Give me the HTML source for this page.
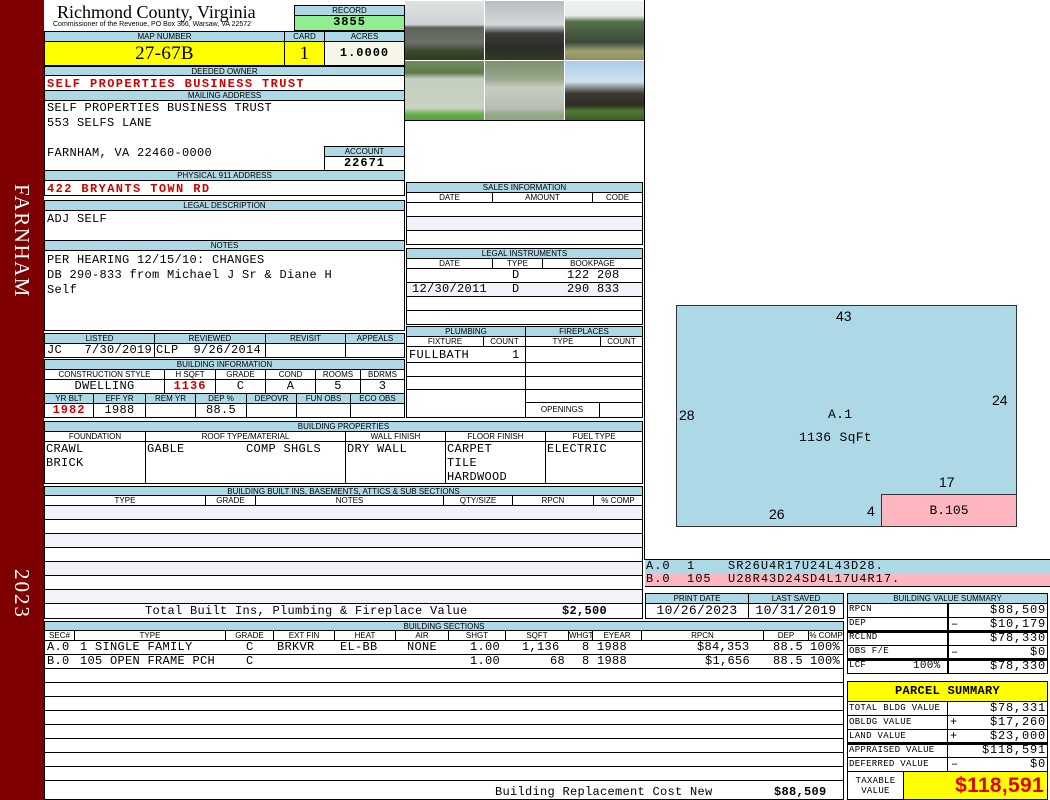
<!DOCTYPE html>
<html><head><meta charset="utf-8"><style>
*{margin:0;padding:0;box-sizing:border-box}
body{width:1050px;height:800px;background:#fff;position:relative;overflow:hidden;font-family:"Liberation Mono",monospace}
div{position:absolute}
.h{background:#add8e6;border:1px solid #000;font:8px/9px "Liberation Sans",sans-serif;text-align:center;color:#000;white-space:nowrap;overflow:hidden}
.c{border:1px solid #000;white-space:nowrap;overflow:hidden;font-size:12px;line-height:13px;letter-spacing:.3px}
.m{font-family:"Liberation Mono",monospace;font-size:12px;letter-spacing:.3px;white-space:nowrap}
.r{color:#d00000;font-weight:bold;letter-spacing:1.4px}
.s{font:8px/9px "Liberation Sans",sans-serif;text-align:center;white-space:nowrap;letter-spacing:0}
</style></head><body>
<div style="left:0;top:0;width:44px;height:800px;background:#7f0000"></div>
<div style="left:4px;top:178px;width:36px;height:125px;color:#fff;font:21px 'Liberation Serif',serif;letter-spacing:1.5px;writing-mode:vertical-rl;text-align:center;line-height:36px">FARNHAM</div>
<div style="left:4px;top:569px;width:36px;height:55px;color:#fff;font:21px 'Liberation Serif',serif;letter-spacing:2px;writing-mode:vertical-rl;line-height:36px">2023</div>

<!-- header -->
<div style="left:57px;top:2px;font:18px/20px 'Liberation Serif',serif">Richmond County, Virginia</div>
<div style="left:53px;top:21px;font:7px/8px 'Liberation Sans',sans-serif">Commissioner of the Revenue, PO Box 366, Warsaw, VA 22572</div>
<div class="h" style="left:294px;top:5px;width:111px;height:11px">RECORD</div>
<div class="c" style="left:294px;top:15px;width:111px;height:16px;background:#90ee90;text-align:center;font-weight:bold;letter-spacing:1px">3855</div>
<div class="h" style="left:44px;top:31px;width:241px;height:11px">MAP NUMBER</div>
<div class="h" style="left:284px;top:31px;width:41px;height:11px">CARD</div>
<div class="h" style="left:324px;top:31px;width:81px;height:11px">ACRES</div>
<div class="c" style="left:44px;top:41px;width:241px;height:25px;background:#ffff00;font:19px/23px 'Liberation Serif',serif;text-align:center">27-67B</div>
<div class="c" style="left:284px;top:41px;width:41px;height:25px;background:#ffff00;font:19px/23px 'Liberation Serif',serif;text-align:center">1</div>
<div class="c" style="left:324px;top:41px;width:81px;height:25px;background:#f5f5e8;font-size:12px;line-height:23px;font-weight:bold;text-align:center;letter-spacing:1px">1.0000</div>
<div class="h" style="left:44px;top:66px;width:361px;height:10px">DEEDED OWNER</div>
<div class="c r" style="left:44px;top:75px;width:361px;height:16px;padding-left:2px;line-height:16px">SELF PROPERTIES BUSINESS TRUST</div>
<div class="h" style="left:44px;top:90px;width:361px;height:11px">MAILING ADDRESS</div>
<div class="c" style="left:44px;top:100px;width:361px;height:71px;padding-left:2px;line-height:15px">SELF PROPERTIES BUSINESS TRUST<br>553 SELFS LANE<br><br>FARNHAM, VA 22460-0000</div>
<div class="h" style="left:324px;top:146px;width:81px;height:11px">ACCOUNT</div>
<div class="c" style="left:324px;top:156px;width:81px;height:15px;text-align:center;font-weight:bold;letter-spacing:1px">22671</div>
<div class="h" style="left:44px;top:170px;width:361px;height:11px">PHYSICAL 911 ADDRESS</div>
<div class="c r" style="left:44px;top:180px;width:361px;height:16px;padding-left:2px;line-height:16px">422 BRYANTS TOWN RD</div>
<div class="h" style="left:44px;top:200px;width:361px;height:11px">LEGAL DESCRIPTION</div>
<div class="c" style="left:44px;top:210px;width:361px;height:31px;padding:2px 0 0 2px">ADJ SELF</div>
<div class="h" style="left:44px;top:240px;width:361px;height:11px">NOTES</div>
<div class="c" style="left:44px;top:250px;width:361px;height:81px;padding:2px 0 0 2px;line-height:15px">PER HEARING 12/15/10: CHANGES<br>DB 290-833 from Michael J Sr &amp; Diane H<br>Self</div>

<!-- listed -->
<div class="h" style="left:44px;top:333px;width:111px;height:11px">LISTED</div>
<div class="h" style="left:154px;top:333px;width:112px;height:11px">REVIEWED</div>
<div class="h" style="left:265px;top:333px;width:81px;height:11px">REVISIT</div>
<div class="h" style="left:345px;top:333px;width:60px;height:11px">APPEALS</div>
<div class="c" style="left:44px;top:343px;width:111px;height:15px;padding-left:2px">JC&nbsp;&nbsp;&nbsp;7/30/2019</div>
<div class="c" style="left:154px;top:343px;width:112px;height:15px;padding-left:1px">CLP&nbsp;&nbsp;9/26/2014</div>
<div class="c" style="left:265px;top:343px;width:81px;height:15px"></div>
<div class="c" style="left:345px;top:343px;width:60px;height:15px"></div>
<div class="h" style="left:44px;top:359px;width:361px;height:11px">BUILDING INFORMATION</div>
<div class="c s" style="left:44px;top:369px;width:121px;height:11px">CONSTRUCTION STYLE</div>
<div class="c s" style="left:164px;top:369px;width:52px;height:11px">H SQFT</div>
<div class="c s" style="left:215px;top:369px;width:51px;height:11px">GRADE</div>
<div class="c s" style="left:265px;top:369px;width:51px;height:11px">COND</div>
<div class="c s" style="left:315px;top:369px;width:46px;height:11px">ROOMS</div>
<div class="c s" style="left:360px;top:369px;width:45px;height:11px">BDRMS</div>
<div class="c" style="left:44px;top:379px;width:121px;height:15px;text-align:center">DWELLING</div>
<div class="c r" style="left:164px;top:379px;width:52px;height:15px;text-align:center;letter-spacing:1px">1136</div>
<div class="c" style="left:215px;top:379px;width:51px;height:15px;text-align:center">C</div>
<div class="c" style="left:265px;top:379px;width:51px;height:15px;text-align:center">A</div>
<div class="c" style="left:315px;top:379px;width:46px;height:15px;text-align:center">5</div>
<div class="c" style="left:360px;top:379px;width:45px;height:15px;text-align:center">3</div>
<div class="h" style="left:44px;top:393px;width:50px;height:11px">YR BLT</div>
<div class="h" style="left:93px;top:393px;width:53px;height:11px">EFF YR</div>
<div class="h" style="left:145px;top:393px;width:51px;height:11px">REM YR</div>
<div class="h" style="left:195px;top:393px;width:52px;height:11px">DEP %</div>
<div class="h" style="left:246px;top:393px;width:51px;height:11px">DEPOVR</div>
<div class="h" style="left:296px;top:393px;width:55px;height:11px">FUN OBS</div>
<div class="h" style="left:350px;top:393px;width:55px;height:11px">ECO OBS</div>
<div class="c r" style="left:44px;top:403px;width:50px;height:15px;text-align:center;letter-spacing:1px">1982</div>
<div class="c" style="left:93px;top:403px;width:53px;height:15px;text-align:center">1988</div>
<div class="c" style="left:145px;top:403px;width:51px;height:15px"></div>
<div class="c" style="left:195px;top:403px;width:52px;height:15px;text-align:center">88.5</div>
<div class="c" style="left:246px;top:403px;width:51px;height:15px"></div>
<div class="c" style="left:296px;top:403px;width:55px;height:15px"></div>
<div class="c" style="left:350px;top:403px;width:55px;height:15px"></div>

<!-- photos -->
<div style="left:405px;top:0;width:240px;height:121px;border-bottom:1px solid #000"></div>
<div style="left:405px;top:1px;width:79px;height:59px;background:linear-gradient(#dfe2e2 0,#cfd3d4 40%,#5e6258 45%,#6d706a 70%,#3b4a2e 85%,#2f3a26)"></div>
<div style="left:485px;top:1px;width:79px;height:59px;background:linear-gradient(#b8bcc0 0,#d6d8da 40%,#3c3c38 55%,#2b2c28 80%,#2f3c22)"></div>
<div style="left:565px;top:1px;width:79px;height:59px;background:linear-gradient(#f0f0f0 0,#e8ecec 25%,#54714a 35%,#3c4a38 70%,#a0a070 85%,#8e9060)"></div>
<div style="left:405px;top:61px;width:79px;height:59px;background:linear-gradient(#6e8f5a 0,#5e7a4e 20%,#c5cfbf 30%,#c8d2c2 80%,#66b04a 90%,#5aa040)"></div>
<div style="left:485px;top:61px;width:79px;height:59px;background:linear-gradient(#7e9070 0,#98a88c 30%,#c6ccc2 45%,#b8beb2 80%,#8ea880 92%,#90a880)"></div>
<div style="left:565px;top:61px;width:79px;height:59px;background:linear-gradient(#aacbe8 0,#d0e2f0 35%,#3a3a30 55%,#2e2e26 75%,#4e7a30 85%,#3e5a28)"></div>

<!-- sales -->
<div style="left:405px;top:120px;width:240px;height:62px;border-right:1px solid #000"></div>
<div class="h" style="left:406px;top:182px;width:237px;height:11px">SALES INFORMATION</div>
<div class="c s" style="left:406px;top:192px;width:87px;height:11px">DATE</div>
<div class="c s" style="left:492px;top:192px;width:101px;height:11px">AMOUNT</div>
<div class="c s" style="left:592px;top:192px;width:51px;height:11px">CODE</div>
<div class="c" style="left:406px;top:202px;width:237px;height:15px"></div>
<div class="c" style="left:406px;top:216px;width:237px;height:15px;background:#f2f3f8"></div>
<div class="c" style="left:406px;top:230px;width:237px;height:15px"></div>
<div class="h" style="left:406px;top:248px;width:237px;height:11px">LEGAL INSTRUMENTS</div>
<div class="c s" style="left:406px;top:258px;width:87px;height:11px">DATE</div>
<div class="c s" style="left:492px;top:258px;width:51px;height:11px">TYPE</div>
<div class="c s" style="left:542px;top:258px;width:101px;height:11px">BOOKPAGE</div>
<div class="c" style="left:406px;top:268px;width:237px;height:15px;line-height:13px"><span style="position:absolute;left:105px">D</span><span style="position:absolute;left:160px">122 208</span></div>
<div class="c" style="left:406px;top:282px;width:237px;height:15px;background:#f2f3f8;line-height:13px"><span style="position:absolute;left:5px">12/30/2011</span><span style="position:absolute;left:105px">D</span><span style="position:absolute;left:160px">290 833</span></div>
<div class="c" style="left:406px;top:296px;width:237px;height:15px"></div>
<div class="c" style="left:406px;top:310px;width:237px;height:15px"></div>

<!-- plumbing -->
<div class="h" style="left:406px;top:326px;width:120px;height:11px">PLUMBING</div>
<div class="h" style="left:525px;top:326px;width:118px;height:11px">FIREPLACES</div>
<div class="c s" style="left:406px;top:336px;width:78px;height:11px">FIXTURE</div>
<div class="c s" style="left:483px;top:336px;width:43px;height:11px">COUNT</div>
<div class="c s" style="left:525px;top:336px;width:76px;height:11px">TYPE</div>
<div class="c s" style="left:600px;top:336px;width:43px;height:11px">COUNT</div>
<div class="c" style="left:406px;top:346px;width:120px;height:72px;line-height:16px;padding-left:2px">FULLBATH<span style="position:absolute;left:105px">1</span></div>
<div style="left:406px;top:362px;width:120px;border-top:1px solid #000"></div>
<div style="left:406px;top:376px;width:120px;border-top:1px solid #000"></div>
<div style="left:406px;top:389px;width:120px;border-top:1px solid #000"></div>
<div class="c" style="left:525px;top:346px;width:118px;height:72px"></div>
<div style="left:525px;top:362px;width:118px;border-top:1px solid #000"></div>
<div style="left:525px;top:376px;width:118px;border-top:1px solid #000"></div>
<div style="left:525px;top:389px;width:118px;border-top:1px solid #000"></div>
<div style="left:525px;top:402px;width:118px;border-top:1px solid #000"></div>
<div class="s" style="left:526px;top:405px;width:72px">OPENINGS</div>
<div style="left:599px;top:402px;height:15px;border-left:1px solid #000"></div>

<!-- building properties -->
<div class="h" style="left:44px;top:421px;width:599px;height:11px">BUILDING PROPERTIES</div>
<div class="c s" style="left:44px;top:431px;width:102px;height:11px">FOUNDATION</div>
<div class="c s" style="left:145px;top:431px;width:201px;height:11px">ROOF TYPE/MATERIAL</div>
<div class="c s" style="left:345px;top:431px;width:101px;height:11px">WALL FINISH</div>
<div class="c s" style="left:445px;top:431px;width:101px;height:11px">FLOOR FINISH</div>
<div class="c s" style="left:545px;top:431px;width:98px;height:11px">FUEL TYPE</div>
<div class="c" style="left:44px;top:441px;width:102px;height:43px;line-height:14px;padding-left:1px">CRAWL<br>BRICK</div>
<div class="c" style="left:145px;top:441px;width:201px;height:43px;line-height:14px;padding-left:1px">GABLE<span style="position:absolute;left:100px">COMP SHGLS</span></div>
<div class="c" style="left:345px;top:441px;width:101px;height:43px;line-height:14px;padding-left:1px">DRY WALL</div>
<div class="c" style="left:445px;top:441px;width:101px;height:43px;line-height:14px;padding-left:1px">CARPET<br>TILE<br>HARDWOOD</div>
<div class="c" style="left:545px;top:441px;width:98px;height:43px;line-height:14px;padding-left:1px">ELECTRIC</div>

<!-- built ins -->
<div class="h" style="left:44px;top:486px;width:599px;height:10px">BUILDING BUILT INS, BASEMENTS, ATTICS &amp; SUB SECTIONS</div>
<div class="c s" style="left:44px;top:495px;width:162px;height:11px">TYPE</div>
<div class="c s" style="left:205px;top:495px;width:51px;height:11px">GRADE</div>
<div class="c s" style="left:255px;top:495px;width:189px;height:11px">NOTES</div>
<div class="c s" style="left:443px;top:495px;width:70px;height:11px">QTY/SIZE</div>
<div class="c s" style="left:512px;top:495px;width:82px;height:11px">RPCN</div>
<div class="c s" style="left:593px;top:495px;width:50px;height:11px">% COMP</div>
<div class="c" style="left:44px;top:505px;width:599px;height:99px;background:repeating-linear-gradient(#f2f3f8 0 13px,#000 13px 14px,#fff 14px 27px,#000 27px 28px)"></div>
<div class="c" style="left:44px;top:603px;width:599px;height:16px;line-height:14px"><span style="position:absolute;left:100px">Total Built Ins, Plumbing &amp; Fireplace Value</span><span style="position:absolute;left:517px;font-weight:bold">$2,500</span></div>

<!-- sketch -->
<div style="left:644px;top:0;width:406px;height:560px;border-left:1px solid #000"></div>
<div style="left:676px;top:305px;width:341px;height:222px;background:#add8e6;border:1px solid #333"></div>
<div style="left:881px;top:494px;width:136px;height:33px;background:#ffb6c1;border:1px solid #333;font-size:13px;line-height:31px;text-align:center">B.105</div>
<div style="left:836px;top:308px;font:14px 'Liberation Sans',sans-serif">43</div>
<div style="left:679px;top:407px;font:14px 'Liberation Sans',sans-serif">28</div>
<div style="left:992px;top:392px;font:14px 'Liberation Sans',sans-serif">24</div>
<div style="left:939px;top:474px;font:14px 'Liberation Sans',sans-serif">17</div>
<div style="left:769px;top:506px;font:14px 'Liberation Sans',sans-serif">26</div>
<div style="left:867px;top:503px;font:14px 'Liberation Sans',sans-serif">4</div>
<div class="m" style="left:828px;top:407px;font-size:13px">A.1</div>
<div class="m" style="left:799px;top:430px;font-size:13px">1136 SqFt</div>
<div class="m" style="left:645px;top:559px;width:405px;height:14px;background:#add8e6;border-top:1px solid #000;line-height:13px;padding-left:1px;letter-spacing:1px">A.0&nbsp;&nbsp;1&nbsp;&nbsp;&nbsp;&nbsp;SR26U4R17U24L43D28.</div>
<div class="m" style="left:645px;top:573px;width:405px;height:14px;background:#ffb6c1;line-height:13px;padding-left:1px;border-bottom:1px solid #000;letter-spacing:1px">B.0&nbsp;&nbsp;105&nbsp;&nbsp;U28R43D24SD4L17U4R17.</div>

<!-- print date -->
<div class="h" style="left:645px;top:593px;width:104px;height:11px">PRINT DATE</div>
<div class="h" style="left:748px;top:593px;width:96px;height:11px">LAST SAVED</div>
<div class="c" style="left:645px;top:603px;width:104px;height:16px;text-align:center;font-size:13px">10/26/2023</div>
<div class="c" style="left:748px;top:603px;width:96px;height:16px;text-align:center;font-size:13px">10/31/2019</div>

<!-- building sections -->
<div class="h" style="left:44px;top:621px;width:800px;height:10px">BUILDING SECTIONS</div>
<div class="c s" style="left:44px;top:630px;width:31px;height:11px">SEC#</div>
<div class="c s" style="left:74px;top:630px;width:152px;height:11px">TYPE</div>
<div class="c s" style="left:225px;top:630px;width:49px;height:11px">GRADE</div>
<div class="c s" style="left:273px;top:630px;width:62px;height:11px">EXT FIN</div>
<div class="c s" style="left:334px;top:630px;width:62px;height:11px">HEAT</div>
<div class="c s" style="left:395px;top:630px;width:54px;height:11px">AIR</div>
<div class="c s" style="left:448px;top:630px;width:58px;height:11px">SHGT</div>
<div class="c s" style="left:505px;top:630px;width:64px;height:11px">SQFT</div>
<div class="c s" style="left:568px;top:630px;width:25px;height:11px">WHGT</div>
<div class="c s" style="left:592px;top:630px;width:50px;height:11px">EYEAR</div>
<div class="c s" style="left:641px;top:630px;width:123px;height:11px">RPCN</div>
<div class="c s" style="left:763px;top:630px;width:46px;height:11px">DEP</div>
<div class="c s" style="left:808px;top:630px;width:36px;height:11px">% COMP</div>
<div class="c" style="left:44px;top:640px;width:800px;height:160px;background:repeating-linear-gradient(#fff 0 13px,#000 13px 14px)"></div>
<div class="m" style="left:47px;top:641px;line-height:13px">A.0</div>
<div class="m" style="left:80px;top:641px;line-height:13px">1 SINGLE FAMILY</div>
<div class="m" style="left:246px;top:641px;line-height:13px">C</div>
<div class="m" style="left:277px;top:641px;line-height:13px">BRKVR</div>
<div class="m" style="left:340px;top:641px;line-height:13px">EL-BB</div>
<div class="m" style="left:407px;top:641px;line-height:13px">NONE</div>
<div class="m" style="left:470px;top:641px;line-height:13px">1.00</div>
<div class="m" style="left:522px;top:641px;line-height:13px">1,136</div>
<div class="m" style="left:582px;top:641px;line-height:13px">8 1988</div>
<div class="m" style="left:697px;top:641px;line-height:13px">$84,353</div>
<div class="m" style="left:773px;top:641px;line-height:13px">88.5</div>
<div class="m" style="left:810px;top:641px;line-height:13px">100%</div>
<div class="m" style="left:47px;top:655px;line-height:13px">B.0</div>
<div class="m" style="left:80px;top:655px;line-height:13px">105 OPEN FRAME PCH</div>
<div class="m" style="left:246px;top:655px;line-height:13px">C</div>
<div class="m" style="left:470px;top:655px;line-height:13px">1.00</div>
<div class="m" style="left:550px;top:655px;line-height:13px">68</div>
<div class="m" style="left:582px;top:655px;line-height:13px">8 1988</div>
<div class="m" style="left:705px;top:655px;line-height:13px">$1,656</div>
<div class="m" style="left:773px;top:655px;line-height:13px">88.5</div>
<div class="m" style="left:810px;top:655px;line-height:13px">100%</div>
<div style="left:45px;top:782px;width:798px;height:17px;background:#fff"></div>
<div class="m" style="left:495px;top:785px">Building Replacement Cost New</div>
<div class="m" style="left:774px;top:785px;font-weight:bold">$88,509</div>

<!-- building value summary -->
<div class="h" style="left:847px;top:593px;width:201px;height:11px">BUILDING VALUE SUMMARY</div>
<div class="c" style="left:847px;top:603px;width:201px;height:71px"></div>
<div style="left:947px;top:603px;height:71px;border-left:2px solid #000"></div>
<div style="left:847px;top:617px;width:201px;border-top:1px solid #000"></div>
<div style="left:847px;top:630px;width:201px;border-top:3px solid #000"></div>
<div style="left:847px;top:645px;width:201px;border-top:1px solid #000"></div>
<div style="left:847px;top:658px;width:201px;border-top:3px solid #000"></div>
<div class="m" style="left:849px;top:604px;font-size:9px">RPCN</div>
<div class="m" style="left:849px;top:618px;font-size:9px">DEP</div>
<div class="m" style="left:849px;top:632px;font-size:9px">RCLND</div>
<div class="m" style="left:849px;top:646px;font-size:9px">OBS F/E</div>
<div class="m" style="left:849px;top:660px;font-size:9px">LCF</div>
<div class="m" style="left:913px;top:660px;font-size:11px">100%</div>
<div class="m" style="left:951px;top:617px">–</div>
<div class="m" style="left:951px;top:645px">–</div>
<div class="m" style="left:950px;top:603px;width:96px;text-align:right;font-size:12px;letter-spacing:.8px">$88,509</div>
<div class="m" style="left:950px;top:617px;width:96px;text-align:right;font-size:12px;letter-spacing:.8px">$10,179</div>
<div class="m" style="left:950px;top:631px;width:96px;text-align:right;font-size:12px;letter-spacing:.8px">$78,330</div>
<div class="m" style="left:950px;top:645px;width:96px;text-align:right;font-size:12px;letter-spacing:.8px">$0</div>
<div class="m" style="left:950px;top:659px;width:96px;text-align:right;font-size:12px;letter-spacing:.8px">$78,330</div>

<!-- parcel summary -->
<div class="c" style="left:847px;top:681px;width:201px;height:21px;background:#ffff00;text-align:center;font:bold 12px/19px 'Liberation Mono',monospace">PARCEL SUMMARY</div>
<div class="c" style="left:847px;top:701px;width:201px;height:71px"></div>
<div style="left:947px;top:701px;height:71px;border-left:1px solid #000"></div>
<div style="left:847px;top:715px;width:201px;border-top:1px solid #000"></div>
<div style="left:847px;top:729px;width:201px;border-top:1px solid #000"></div>
<div style="left:847px;top:742px;width:201px;border-top:3px solid #000"></div>
<div style="left:847px;top:757px;width:201px;border-top:1px solid #000"></div>
<div class="m" style="left:849px;top:703px;font-size:9px">TOTAL BLDG VALUE</div>
<div class="m" style="left:849px;top:717px;font-size:9px">OBLDG VALUE</div>
<div class="m" style="left:849px;top:731px;font-size:9px">LAND VALUE</div>
<div class="m" style="left:849px;top:745px;font-size:9px">APPRAISED VALUE</div>
<div class="m" style="left:849px;top:759px;font-size:9px">DEFERRED VALUE</div>
<div class="m" style="left:950px;top:715px">+</div>
<div class="m" style="left:950px;top:729px">+</div>
<div class="m" style="left:951px;top:757px">–</div>
<div class="m" style="left:950px;top:701px;width:96px;text-align:right;font-size:12px;letter-spacing:.8px">$78,331</div>
<div class="m" style="left:950px;top:715px;width:96px;text-align:right;font-size:12px;letter-spacing:.8px">$17,260</div>
<div class="m" style="left:950px;top:729px;width:96px;text-align:right;font-size:12px;letter-spacing:.8px">$23,000</div>
<div class="m" style="left:950px;top:743px;width:96px;text-align:right;font-size:12px;letter-spacing:.8px">$118,591</div>
<div class="m" style="left:950px;top:757px;width:96px;text-align:right;font-size:12px;letter-spacing:.8px">$0</div>
<div class="c" style="left:847px;top:771px;width:57px;height:29px;font:9px/10px 'Liberation Mono',monospace;text-align:center;padding-top:4px">TAXABLE<br>VALUE</div>
<div class="c" style="left:903px;top:771px;width:145px;height:29px;background:#ffff00;color:#e00000;font:bold 21px/27px 'Liberation Sans',sans-serif;text-align:right;padding-right:3px">$118,591</div>
</body></html>
